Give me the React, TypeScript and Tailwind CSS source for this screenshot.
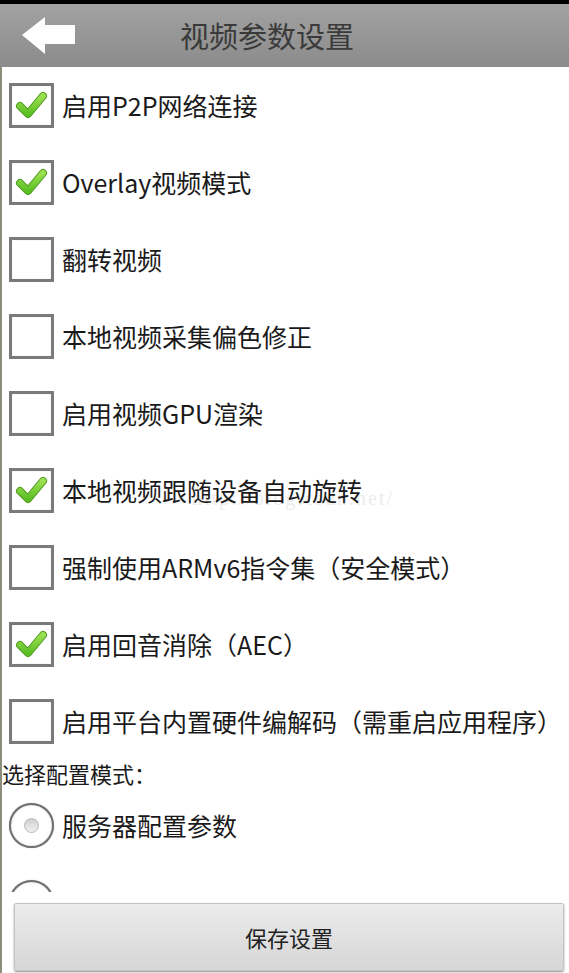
import React from "react";

const items: { label: string; checked: boolean }[] = [
  { label: "启用P2P网络连接", checked: true },
  { label: "Overlay视频模式", checked: true },
  { label: "翻转视频", checked: false },
  { label: "本地视频采集偏色修正", checked: false },
  { label: "启用视频GPU渲染", checked: false },
  { label: "本地视频跟随设备自动旋转", checked: true },
  { label: "强制使用ARMv6指令集（安全模式）", checked: false },
  { label: "启用回音消除（AEC）", checked: true },
  { label: "启用平台内置硬件编解码（需重启应用程序）", checked: false },
];

function CheckBox({ checked }: { checked: boolean }) {
  return (
    <div className="w-[45px] h-[45px] shrink-0 border-[3px] border-[#7a7a7a] bg-white shadow-[inset_0_0_1px_rgba(0,0,0,0.3)] relative">
      {checked && (
        <svg width="45" height="45" viewBox="0 0 45 45" className="absolute left-[-3px] top-[-3px]">
          <defs>
            <linearGradient id="chk" x1="0" y1="0" x2="0" y2="1">
              <stop offset="0" stopColor="#9be050" />
              <stop offset="1" stopColor="#5cbf24" />
            </linearGradient>
          </defs>
          <path d="M11 23 L19 31 L34 13" fill="none" stroke="#4f9a22" strokeWidth="8" strokeLinecap="round" strokeLinejoin="round" />
          <path d="M11 23 L19 31 L34 13" fill="none" stroke="url(#chk)" strokeWidth="6" strokeLinecap="round" strokeLinejoin="round" />
        </svg>
      )}
    </div>
  );
}

function Radio() {
  return (
    <div className="w-[45px] h-[45px] shrink-0 rounded-full border-[2px] border-[#707070] bg-white shadow-[0_0_1px_rgba(0,0,0,0.4),inset_0_0_2px_rgba(0,0,0,0.2)] flex items-center justify-center">
      <div className="w-[15px] h-[15px] rounded-full bg-gradient-to-b from-[#d0d0d0] to-[#f0f0f0] border border-[#b8b8b8]" />
    </div>
  );
}

export default function App() {
  return (
    <div
      className="w-[569px] h-[973px] bg-white overflow-hidden flex flex-col [text-spacing-trim:space-all]"
      style={{ fontFamily: '"Noto Sans CJK SC", "Noto Sans", sans-serif' }}
    >
      <div className="h-[4px] bg-black shrink-0" />
      <header className="h-[63px] shrink-0 flex items-center bg-gradient-to-b from-[#a2a2a2] to-[#8b8b8b]">
        <svg width="54" height="38" viewBox="0 0 54 38" className="ml-[22px] shrink-0">
          <polygon points="0,18 23,0 23,8 53,8 53,27 23,27 23,37" fill="#ffffff" />
        </svg>
        <div className="ml-[104px] text-[29px] leading-none text-[#3a3a3a]">视频参数设置</div>
      </header>
      <div className="flex-1 flex flex-col border-l-2 border-[#8c8c7a] min-h-0">
        <div className="h-[825px] overflow-hidden relative shrink-0">
          <div
            className="absolute left-[190px] top-[416px] text-[20px] text-[#ececec] pointer-events-none tracking-[2px]"
            style={{ fontFamily: '"Liberation Serif", serif' }}
          >
            http://blog.csdn.net/
          </div>
          {items.map((it) => (
            <div key={it.label} className="h-[77px] flex items-center pl-[7px] relative">
              <CheckBox checked={it.checked} />
              <span className="ml-[8px] text-[25px] leading-none text-[#1a1a1a] whitespace-nowrap">{it.label}</span>
            </div>
          ))}
          <div className="h-[26px] flex items-center text-[22px] leading-none text-[#1a1a1a]">选择配置模式：</div>
          <div className="h-[78px] flex items-center pl-[7px]">
            <Radio />
            <span className="ml-[8px] text-[25px] leading-none text-[#1a1a1a]">服务器配置参数</span>
          </div>
          <div className="h-[77px] flex items-center pl-[7px]">
            <Radio />
          </div>
        </div>
        <div className="flex-1 pt-[11px] pl-[12px] pr-[5px]">
          <button className="w-full h-[68px] rounded-[2px] border border-[#c4c4c4] bg-gradient-to-b from-[#ececec] to-[#d6d6d6] shadow-[0_1px_2px_rgba(0,0,0,0.45)] text-[22px] text-[#222222] flex items-center justify-center">
            保存设置
          </button>
        </div>
      </div>
    </div>
  );
}
